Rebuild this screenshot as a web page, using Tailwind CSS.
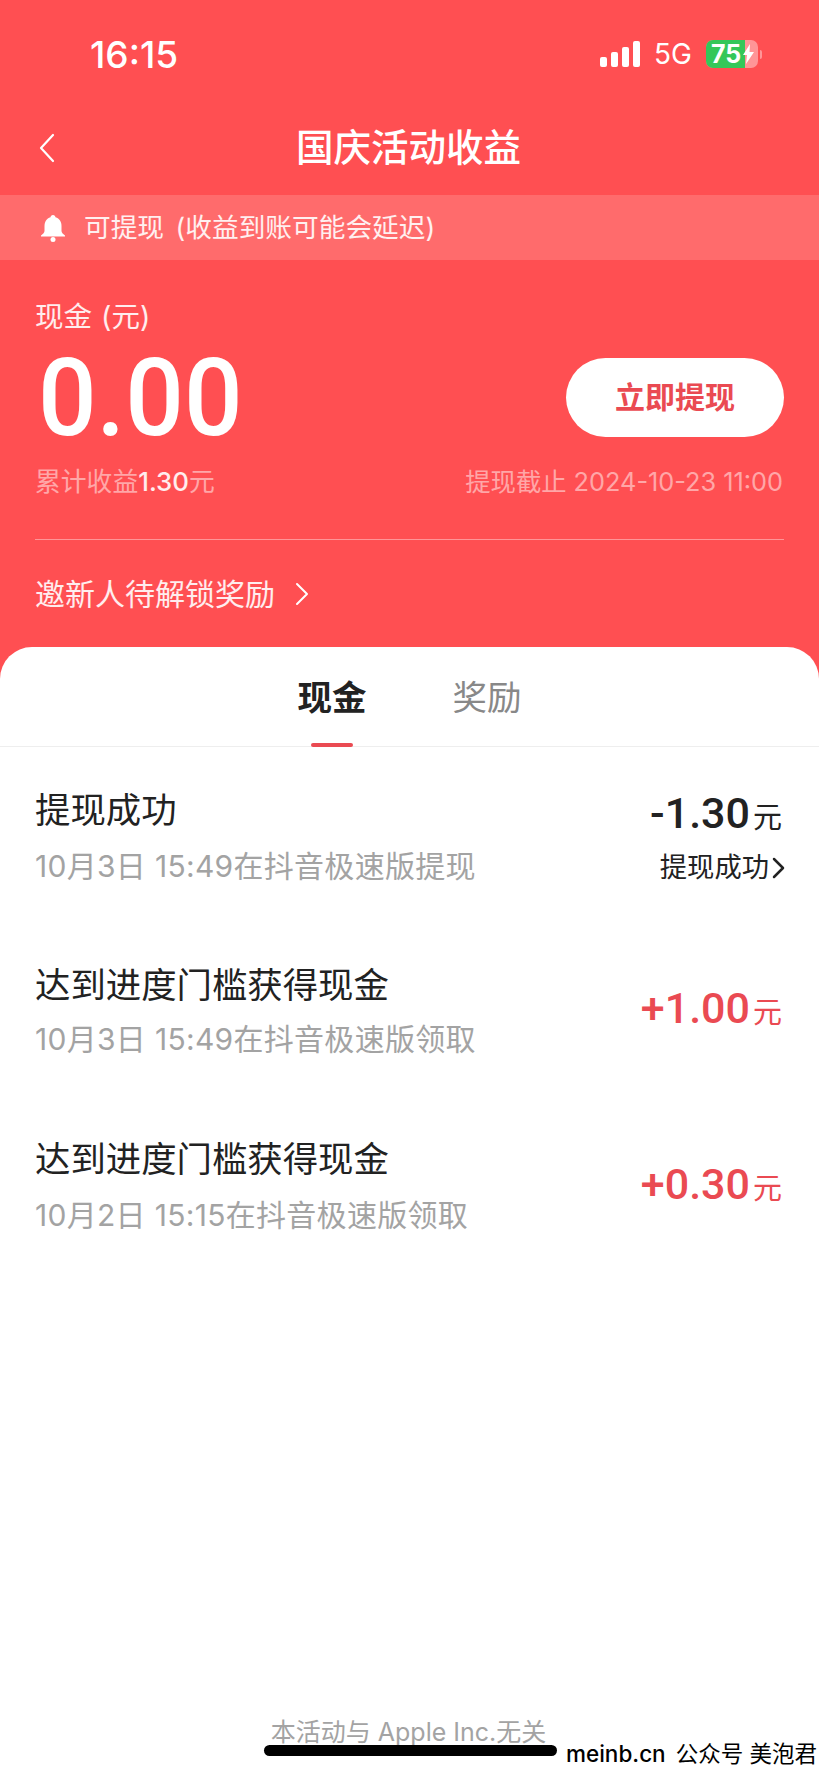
<!DOCTYPE html>
<html lang="zh-CN">
  <head>
    <meta charset="UTF-8" />
    <meta name="viewport" content="width=device-width, initial-scale=1.0" />
    <title>国庆活动收益</title>
    <script src="https://cdn.jsdelivr.net/npm/@tailwindcss/browser@4"></script>
  </head>
  <body class="bg-white font-['Inter','Noto_Sans_CJK_SC',sans-serif]">
    <div class="relative w-[819px] h-[1772px] overflow-hidden bg-[#ff4f52] flex flex-col">
      <!-- Status bar -->
      <div class="h-[108px] shrink-0 flex items-center pl-[90px] pr-[57px] text-white">
        <span class="text-[37px] leading-none font-medium">16:15</span>
        <div class="ml-auto flex items-center">
          <svg width="41" height="26" viewBox="0 0 41 26" fill="#fff">
            <rect x="0" y="16" width="7" height="10" rx="2" />
            <rect x="11" y="11" width="7" height="15" rx="2" />
            <rect x="22" y="6" width="7" height="20" rx="2" />
            <rect x="33" y="0" width="7" height="26" rx="2" />
          </svg>
          <span class="ml-[13px] text-[28px] leading-none">5G</span>
          <div class="ml-[14px] relative w-[52px] h-[28px] rounded-[7px] bg-white/40 overflow-hidden">
            <div class="absolute inset-y-0 left-0 w-[39px] bg-[#34c759]"></div>
            <span class="absolute left-[5px] top-[2px] text-[25px] leading-[24px] font-bold">75</span>
            <svg class="absolute left-[36px] top-[4px]" width="13" height="20" viewBox="0 0 13 20" fill="#fff">
              <path d="M8 0 1 11h4l-1 9 8-12H7.500z" />
            </svg>
          </div>
          <div class="ml-[2px] w-[2px] h-[9px] rounded-r bg-white/40"></div>
        </div>
      </div>

      <!-- Title bar -->
      <div class="h-[87px] shrink-0 relative flex items-center justify-center pr-[2px] text-white">
        <svg class="absolute left-[38px] top-[25px]" width="18" height="30" viewBox="0 0 18 30" fill="none" stroke="#fff" stroke-width="2.200" stroke-linecap="round" stroke-linejoin="round">
          <path d="M15 2 3 15l12 13" />
        </svg>
        <h1 class="text-[37.500px] leading-none font-medium mt-[-8px]">国庆活动收益</h1>
      </div>

      <!-- Notice -->
      <div class="h-[65px] shrink-0 bg-[#ff6b6c] flex items-center pl-[39px] text-white/90">
        <svg width="28" height="28" viewBox="0 0 28 28" fill="#fff">
          <path d="M14 1c1.500 0 2.400 1 2.500 2.300C20.500 4.400 22.500 7.800 22.500 12v5c0 1.500 1.300 2.700 3.500 4.500v1H2v-1C4.200 19.700 5.500 18.500 5.500 17v-5c0-4.200 2-7.600 6-8.700C11.600 2 12.500 1 14 1z" />
          <circle cx="14" cy="25.500" r="2.500" />
        </svg>
        <span class="ml-[17px] text-[26.700px] leading-none whitespace-nowrap [word-spacing:4px]">可提现 (收益到账可能会延迟)</span>
      </div>

      <!-- Balance -->
      <div class="h-[387px] shrink-0 px-[35px] pt-[38px] text-white flex flex-col">
        <div class="text-[28.500px] leading-[38px] text-white/90 [word-spacing:1px]">现金 (元)</div>
        <div class="mt-[10px] flex items-center justify-between">
          <div class="pl-[3px] pt-[4px] text-[107px] leading-[98px] font-medium font-['Roboto',sans-serif] origin-left scale-x-[0.965]">0.00</div>
          <button class="w-[218px] h-[79px] rounded-full bg-white text-[#ea4a52] text-[30px] font-bold">立即提现</button>
        </div>
        <div class="mt-[12px] h-[44px] flex items-center justify-between text-[25.800px] text-white/50">
          <span>累计收益<span class="text-white/90 font-medium">1.30</span>元</span>
          <span class="mr-[1px] text-[25.300px]">提现截止 2024-10-23 11:00</span>
        </div>
        <div class="mt-[35px] border-t border-white/40"></div>
        <div class="mt-[34px] flex items-center text-[30px] leading-[40px] text-white/90">
          <span>邀新人待解锁奖励</span>
          <svg class="ml-[20px]" width="14" height="24" viewBox="0 0 14 24" fill="none" stroke="#fff" stroke-width="2" stroke-linecap="round" stroke-linejoin="round">
            <path d="m2 2 10 10L2 22" />
          </svg>
        </div>
      </div>

      <!-- Sheet -->
      <div class="flex-1 bg-white rounded-t-[32px] flex flex-col">
        <div class="h-[100px] shrink-0 border-b border-[#eeeeee] flex justify-center gap-[86px] pt-[29px] relative">
          <span class="text-[34.500px] leading-[44px] font-bold text-[#222222]">现金</span>
          <span class="text-[34.500px] leading-[44px] text-[#888888]">奖励</span>
          <div class="absolute left-[311px] bottom-[-1px] w-[42px] h-[4px] rounded-full bg-[#ea4a52]"></div>
        </div>

        <div class="px-[35px] text-[#222222]">
          <div class="mt-[42px] flex justify-between">
            <div>
              <div class="text-[35.400px] leading-[44px]">提现成功</div>
              <div class="mt-[13px] text-[30px] tracking-[0.3px] leading-[40px] text-[#a3a3a3]">10月3日 15:49在抖音极速版提现</div>
            </div>
            <div class="flex flex-col items-end pr-[2px] pt-[1px]">
              <div class="flex items-baseline leading-[46px]">
                <span class="text-[43px] font-medium font-['Roboto',sans-serif]">-1.30</span>
                <span class="ml-[3px] text-[29px]">元</span>
              </div>
              <div class="mt-[7px] -mr-[3px] flex items-center text-[27.300px] leading-[40px]">
                提现成功
                <svg class="ml-[3px]" width="13" height="22" viewBox="0 0 13 22" fill="none" stroke="#222" stroke-width="2.500" stroke-linecap="round" stroke-linejoin="round">
                  <path d="m2 2 9 9-9 9" />
                </svg>
              </div>
            </div>
          </div>

          <div class="mt-[76px] flex justify-between items-center">
            <div>
              <div class="text-[35.400px] leading-[44px]">达到进度门槛获得现金</div>
              <div class="mt-[11px] text-[30px] tracking-[0.3px] leading-[40px] text-[#a3a3a3]">10月3日 15:49在抖音极速版领取</div>
            </div>
            <div class="flex items-baseline pr-[2px] pb-[2px] leading-[46px] text-[#ea4a52]">
              <span class="text-[43px] font-medium font-['Roboto',sans-serif]">+1.00</span>
              <span class="ml-[3px] text-[29px]">元</span>
            </div>
          </div>

          <div class="mt-[79px] flex justify-between items-center">
            <div>
              <div class="text-[35.400px] leading-[44px]">达到进度门槛获得现金</div>
              <div class="mt-[13px] text-[30px] tracking-[0.3px] leading-[40px] text-[#a3a3a3]">10月2日 15:15在抖音极速版领取</div>
            </div>
            <div class="flex items-baseline pr-[2px] leading-[46px] text-[#ea4a52]">
              <span class="text-[43px] font-medium font-['Roboto',sans-serif]">+0.30</span>
              <span class="ml-[3px] text-[29px]">元</span>
            </div>
          </div>
        </div>

        <div class="mt-auto mb-[24px] pr-[2px] text-center text-[25px] leading-[32px] text-[#a3a3a3]">本活动与 Apple Inc.无关</div>
      </div>

      <!-- Home bar and watermark sit over the footer -->
      <div class="absolute left-[264px] top-[1745px] w-[293px] h-[11px] rounded-full bg-black"></div>
      <div class="absolute left-[566px] top-[1738px] flex gap-[10px] text-[22.500px] leading-[32px] text-black whitespace-nowrap">
        <span class="font-medium">meinb.cn</span>
        <span>公众号 美泡君</span>
      </div>
    </div>
  </body>
</html>
